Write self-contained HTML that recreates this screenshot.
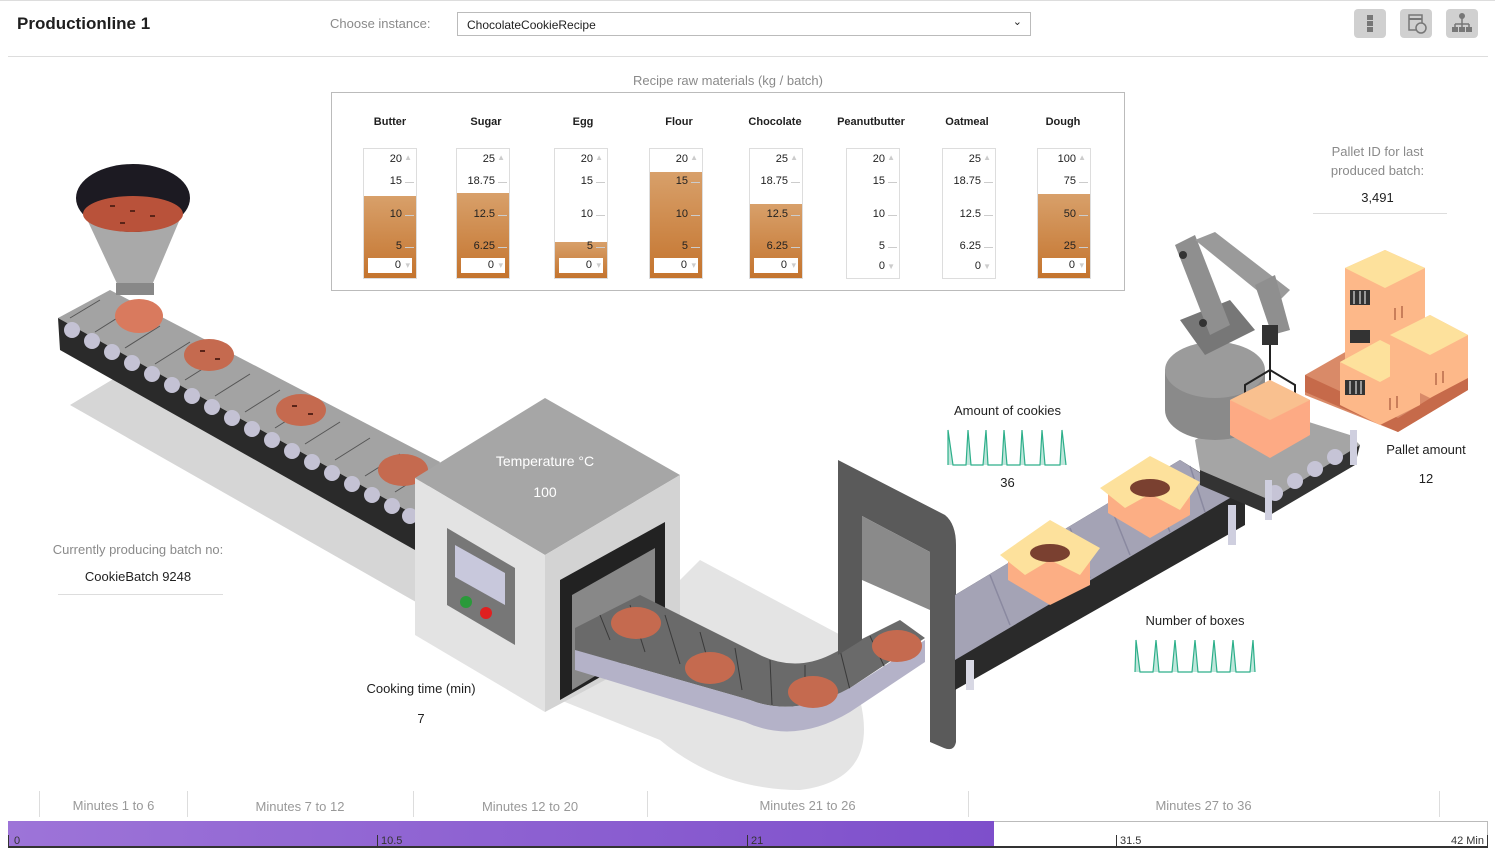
<!DOCTYPE html>
<html><head><meta charset="utf-8"><style>
*{margin:0;padding:0;box-sizing:border-box}
body{width:1495px;height:857px;background:#fff;font-family:"Liberation Sans",sans-serif;position:relative;overflow:hidden;color:#1f1f1f}
.a{position:absolute}
.g{position:absolute;top:148px;width:54px;height:131px;border:1px solid #ddd;background:#fff}
.g .f{position:absolute;left:0;right:0;bottom:0;background:linear-gradient(#d8a06a,#c4742e)}
.g .l{position:absolute;right:14px;font-size:11px;color:#222;text-align:right}
.g .t{position:absolute;right:2px;width:9px;height:1px;background:#ccc}
.g .b{position:absolute;left:4px;right:4px;top:109px;height:15px;background:#fff;font-size:11px;text-align:right;padding-right:11px;line-height:15px}
.g .b:after{content:"▾";position:absolute;right:2px;color:#ccc;font-size:9px}
.g .u{position:absolute;right:4px;top:4px;color:#ccc;font-size:8px}
.h{position:absolute;top:116px;width:90px;text-align:center;font-size:11px;font-weight:bold}
.c{text-align:center;font-size:13px}
.gray{color:#8a8a8a}
.ic{position:absolute;top:9px;width:32px;height:29px;background:#d0d0d0;border-radius:4px}
</style></head><body>
<div class="a" style="left:0;top:0;width:1495px;height:1px;background:#ddd"></div>
<div class="a" style="left:17px;top:14px;font-size:17px;font-weight:bold">Productionline 1</div>
<div class="a gray" style="left:330px;top:16px;font-size:13px">Choose instance:</div>
<div class="a" style="left:457px;top:12px;width:574px;height:24px;border:1px solid #bbb;font-size:12px;padding:5px 9px">ChocolateCookieRecipe<span style="position:absolute;right:8px;top:2px;font-size:11px">⌄</span></div>
<div class="ic" style="left:1354px"><div class="a" style="left:13px;top:6px;width:6px;height:5px;background:#777"></div><div class="a" style="left:13px;top:12px;width:6px;height:5px;background:#777"></div><div class="a" style="left:13px;top:18px;width:6px;height:5px;background:#777"></div></div>
<div class="ic" style="left:1400px"><svg width="32" height="29"><rect x="9" y="6" width="13" height="15" fill="none" stroke="#777" stroke-width="1.5"/><line x1="9" y1="10" x2="22" y2="10" stroke="#777" stroke-width="2"/><circle cx="21" cy="19" r="5" fill="#d0d0d0" stroke="#777" stroke-width="1.5"/></svg></div>
<div class="ic" style="left:1446px"><svg width="32" height="29"><circle cx="16" cy="7" r="3" fill="#777"/><path d="M16 9v6M9 15h14M9 15v4M16 15v4M23 15v4" stroke="#777" stroke-width="1.5" fill="none"/><rect x="6" y="18" width="6" height="5" fill="#777"/><rect x="13" y="18" width="6" height="5" fill="#777"/><rect x="20" y="18" width="6" height="5" fill="#777"/></svg></div>
<div class="a" style="left:8px;top:56px;width:1480px;height:1px;background:#ddd"></div>

<svg class="a" style="left:0;top:0" width="1495" height="857">
<polygon points="70,405 120,375 430,545 430,610" fill="#d6d6d6"/>
<path d="M560,700 L700,560 L850,640 L860,700 Q880,780 800,790 Q720,790 660,740 Z" fill="#e4e4e4"/>
<polygon points="58,318 110,290 440,462 415,515 " fill="#a3a3a3"/>
<polygon points="58,318 415,515 415,550 60,350" fill="#2a2a2a"/>
<g fill="#c4c2d4"><circle cx="72" cy="330" r="8"/><circle cx="92" cy="341" r="8"/><circle cx="112" cy="352" r="8"/><circle cx="132" cy="363" r="8"/><circle cx="152" cy="374" r="8"/><circle cx="172" cy="385" r="8"/><circle cx="192" cy="396" r="8"/><circle cx="212" cy="407" r="8"/><circle cx="232" cy="418" r="8"/><circle cx="252" cy="429" r="8"/><circle cx="272" cy="440" r="8"/><circle cx="292" cy="451" r="8"/><circle cx="312" cy="462" r="8"/><circle cx="332" cy="473" r="8"/><circle cx="352" cy="484" r="8"/><circle cx="372" cy="495" r="8"/><circle cx="392" cy="506" r="8"/><circle cx="410" cy="516" r="8"/></g>
<g stroke="#555" stroke-width="1"><line x1="100" y1="300" x2="70" y2="318"/><line x1="130" y1="310" x2="95" y2="332"/><line x1="160" y1="326" x2="125" y2="348"/><line x1="190" y1="342" x2="155" y2="364"/><line x1="220" y1="358" x2="185" y2="380"/><line x1="250" y1="374" x2="215" y2="396"/><line x1="280" y1="390" x2="245" y2="412"/><line x1="310" y1="406" x2="275" y2="428"/><line x1="340" y1="422" x2="305" y2="444"/><line x1="370" y1="438" x2="335" y2="460"/><line x1="400" y1="454" x2="365" y2="476"/><line x1="430" y1="470" x2="395" y2="492"/></g>
<polygon points="78,200 188,200 150,290 120,290" fill="#a9a9a9"/>
<rect x="116" y="283" width="38" height="12" fill="#888"/>
<ellipse cx="133" cy="198" rx="57" ry="34" fill="#1c1a22"/>
<ellipse cx="133" cy="214" rx="50" ry="18" fill="#b9523a"/>
<ellipse cx="139" cy="316" rx="24" ry="17" fill="#d97a5e"/>
<g fill="#c56a4f"><ellipse cx="209" cy="355" rx="25" ry="16"/><ellipse cx="301" cy="410" rx="25" ry="16"/><ellipse cx="403" cy="470" rx="25" ry="16"/></g>
<g fill="#5a2418"><rect x="110" y="205" width="5" height="2"/><rect x="130" y="210" width="5" height="2"/><rect x="150" y="215" width="5" height="2"/><rect x="120" y="222" width="5" height="2"/><rect x="200" y="350" width="5" height="2"/><rect x="215" y="358" width="5" height="2"/><rect x="292" y="405" width="5" height="2"/><rect x="308" y="413" width="5" height="2"/></g>
<!-- oven -->
<polygon points="415,478 545,398 680,475 545,555" fill="#a6a6a6"/>
<polygon points="415,478 545,555 545,712 415,635" fill="#e3e3e3"/>
<polygon points="545,555 680,475 680,640 545,712" fill="#d3d3d3"/>
<polygon points="447,528 515,568 515,645 447,605" fill="#777"/>
<polygon points="455,545 505,573 505,605 455,577" fill="#c8c8dc"/>
<circle cx="466" cy="602" r="6" fill="#2a9a3a"/><circle cx="486" cy="613" r="6" fill="#e02020"/>
<polygon points="560,580 665,522 665,640 560,700" fill="#222"/>
<polygon points="572,595 655,548 655,640 572,690" fill="#888"/>
<!-- U belt -->
<path d="M575,628 L640,595 L760,655 Q795,672 830,655 L900,620 L925,638 L850,688 Q795,718 750,700 L575,650 Z" fill="#6a6a6a"/>
<g stroke="#3a3a3a" stroke-width="1"><line x1="600" y1="615" x2="610" y2="640"/><line x1="630" y1="605" x2="645" y2="652"/><line x1="665" y1="615" x2="680" y2="664"/><line x1="700" y1="632" x2="712" y2="676"/><line x1="735" y1="648" x2="742" y2="690"/><line x1="770" y1="660" x2="772" y2="705"/><line x1="805" y1="665" x2="805" y2="708"/><line x1="840" y1="650" x2="850" y2="690"/><line x1="870" y1="636" x2="885" y2="668"/></g>
<path d="M575,650 L750,700 Q795,718 850,688 L925,640 L925,662 L850,712 Q795,745 745,722 L575,670 Z" fill="#b4b2c8"/>
<g fill="#c56a4f"><ellipse cx="636" cy="623" rx="25" ry="16"/><ellipse cx="710" cy="668" rx="25" ry="16"/><ellipse cx="813" cy="692" rx="25" ry="16"/><ellipse cx="897" cy="646" rx="25" ry="16"/></g>
<!-- door frame -->
<path d="M838,460 L945,515 Q956,524 956,545 L956,742 Q954,752 944,748 L930,742 L930,552 L862,516 L862,640 L838,655 Z" fill="#5a5a5a"/>
<path d="M862,516 L930,552 L930,610 L862,580 Z" fill="#8a8a8a"/>
<!-- right conveyor -->
<polygon points="955,595 1180,460 1245,500 1245,525 955,690" fill="#2a2a2a"/>
<polygon points="955,595 1180,460 1235,495 955,660" fill="#a4a3b5"/>
<g stroke="#8a89a0" stroke-width="1.5"><line x1="990" y1="575" x2="1010" y2="625"/><line x1="1030" y1="552" x2="1050" y2="602"/><line x1="1070" y1="528" x2="1090" y2="578"/><line x1="1110" y1="505" x2="1130" y2="555"/><line x1="1150" y1="482" x2="1170" y2="532"/><line x1="1190" y1="466" x2="1205" y2="512"/></g>
<rect x="966" y="660" width="8" height="30" fill="#d8d8e4"/>
<polygon points="1008,555 1050,530 1090,555 1090,585 1050,605 1008,580" fill="#fcae84"/>
<polygon points="1000,555 1050,520 1100,548 1080,575 1050,560 1025,575" fill="#fde19c"/>
<ellipse cx="1050" cy="553" rx="20" ry="9" fill="#7a4030"/>
<polygon points="1108,488 1150,462 1190,488 1190,515 1150,538 1108,513" fill="#fcae84"/>
<polygon points="1100,488 1150,456 1200,482 1180,510 1150,494 1125,508" fill="#fde19c"/>
<ellipse cx="1150" cy="488" rx="20" ry="9" fill="#7a4030"/>
<!-- robot conveyor -->
<polygon points="1195,440 1255,405 1350,435 1360,445 1270,500 1200,470" fill="#a5a5a5"/>
<polygon points="1200,470 1270,500 1360,445 1355,465 1270,515 1200,485" fill="#333"/>
<g fill="#c6c4d6"><circle cx="1275" cy="493" r="8"/><circle cx="1295" cy="481" r="8"/><circle cx="1315" cy="469" r="8"/><circle cx="1335" cy="457" r="8"/></g>
<rect x="1265" y="480" width="7" height="40" fill="#cfcfdf"/><rect x="1350" y="430" width="7" height="35" fill="#cfcfdf"/>
<rect x="1228" y="505" width="8" height="40" fill="#cfcfdf"/>
<ellipse cx="1215" cy="410" rx="50" ry="30" fill="#8a8a8a"/>
<rect x="1165" y="370" width="100" height="40" fill="#8a8a8a"/>
<ellipse cx="1215" cy="370" rx="50" ry="28" fill="#9b9b9b"/>
<polygon points="1180,320 1230,300 1255,330 1205,355" fill="#777"/>
<polygon points="1175,245 1195,235 1230,325 1210,335" fill="#8f8f8f"/>
<polygon points="1195,240 1215,232 1290,290 1275,305" fill="#9a9a9a"/>
<polygon points="1255,285 1275,275 1290,330 1272,335" fill="#8f8f8f"/>
<circle cx="1183" cy="255" r="4" fill="#333"/><circle cx="1203" cy="323" r="4" fill="#333"/>
<rect x="1262" y="325" width="16" height="20" fill="#333"/>
<path d="M1270,345 V370 M1270,370 L1245,385 V400 M1270,370 L1295,385 V400 M1270,370 V390" stroke="#222" stroke-width="2" fill="none"/>
<polygon points="1230,400 1270,380 1310,400 1310,435 1270,458 1230,435" fill="#fdaa84"/>
<polygon points="1230,400 1270,380 1310,400 1270,420" fill="#f9c08f"/>
<!-- pallet -->
<polygon points="1305,375 1375,335 1468,370 1468,390 1398,432 1305,395" fill="#d98a68"/>
<polygon points="1305,375 1398,418 1468,375 1468,390 1398,432 1305,392" fill="#c66a4a"/>
<polygon points="1345,268 1385,250 1425,268 1425,315 1385,335 1345,315" fill="#fdb889"/>
<polygon points="1345,268 1385,250 1425,268 1385,288" fill="#fde19c"/>
<polygon points="1345,315 1385,300 1425,315 1425,370 1385,390 1345,370" fill="#fdb889"/>
<polygon points="1340,362 1380,340 1420,360 1420,405 1380,425 1340,405" fill="#fdb889"/>
<polygon points="1340,362 1380,340 1420,360 1380,382" fill="#fde19c"/>
<polygon points="1390,335 1430,315 1468,335 1468,378 1430,398 1390,378" fill="#fdb889"/>
<polygon points="1390,335 1430,315 1468,335 1430,355" fill="#fde19c"/>
<g fill="#333"><rect x="1350" y="290" width="20" height="15"/><rect x="1345" y="380" width="20" height="15"/><rect x="1350" y="330" width="20" height="13"/></g>
<g stroke="#fff" stroke-width="1"><line x1="1354" y1="291" x2="1354" y2="304"/><line x1="1360" y1="291" x2="1360" y2="304"/><line x1="1365" y1="291" x2="1365" y2="304"/><line x1="1350" y1="381" x2="1350" y2="394"/><line x1="1356" y1="381" x2="1356" y2="394"/><line x1="1361" y1="381" x2="1361" y2="394"/></g>
<g stroke="#b86a4a" stroke-width="1.5"><path d="M1395,320 v-12 M1402,318 v-12 M1390,410 v-12 M1397,408 v-12 M1436,385 v-12 M1443,383 v-12"/></g>
<g fill="#bfe6db" stroke="#2daf8a" stroke-width="1.2">
<path d="M948,465 L948,430 L953,465 L966,465 L968,430 L971,465 L983,465 L986,430 L988,465 L1002,465 L1004,430 L1007,465 L1020,465 L1022,430 L1025,465 L1040,465 L1042,430 L1045,465 L1060,465 L1062,430 L1066,465"/>
<path d="M1135,672 L1136,640 L1140,672 L1153,672 L1156,640 L1159,672 L1172,672 L1175,640 L1178,672 L1192,672 L1195,640 L1198,672 L1211,672 L1214,640 L1217,672 L1230,672 L1233,640 L1236,672 L1250,672 L1253,640 L1255,672"/>
</g>
</svg>

<div class="a gray c" style="left:331px;top:73px;width:794px">Recipe raw materials (kg / batch)</div>
<div class="a" style="left:331px;top:92px;width:794px;height:199px;border:1px solid #bbb;background:#fff"></div>
<div class="h" style="left:345px">Butter</div><div class="h" style="left:441px">Sugar</div><div class="h" style="left:538px">Egg</div><div class="h" style="left:634px">Flour</div><div class="h" style="left:730px">Chocolate</div><div class="h" style="left:826px">Peanutbutter</div><div class="h" style="left:922px">Oatmeal</div><div class="h" style="left:1018px">Dough</div>

<div class="g" style="left:363px"><div class="f" style="height:82px"></div><span class="l" style="top:4px">20</span><span class="u">▲</span><span class="l" style="top:26px">15</span><span class="t" style="top:33px"></span><span class="l" style="top:59px">10</span><span class="t" style="top:66px"></span><span class="l" style="top:91px">5</span><span class="t" style="top:98px"></span><div class="b">0</div></div>
<div class="g" style="left:456px"><div class="f" style="height:85px"></div><span class="l" style="top:4px">25</span><span class="u">▲</span><span class="l" style="top:26px">18.75</span><span class="t" style="top:33px"></span><span class="l" style="top:59px">12.5</span><span class="t" style="top:66px"></span><span class="l" style="top:91px">6.25</span><span class="t" style="top:98px"></span><div class="b">0</div></div>
<div class="g" style="left:554px"><div class="f" style="height:36px"></div><span class="l" style="top:4px">20</span><span class="u">▲</span><span class="l" style="top:26px">15</span><span class="t" style="top:33px"></span><span class="l" style="top:59px">10</span><span class="t" style="top:66px"></span><span class="l" style="top:91px">5</span><span class="t" style="top:98px"></span><div class="b">0</div></div>
<div class="g" style="left:649px"><div class="f" style="height:106px"></div><span class="l" style="top:4px">20</span><span class="u">▲</span><span class="l" style="top:26px">15</span><span class="t" style="top:33px"></span><span class="l" style="top:59px">10</span><span class="t" style="top:66px"></span><span class="l" style="top:91px">5</span><span class="t" style="top:98px"></span><div class="b">0</div></div>
<div class="g" style="left:749px"><div class="f" style="height:74px"></div><span class="l" style="top:4px">25</span><span class="u">▲</span><span class="l" style="top:26px">18.75</span><span class="t" style="top:33px"></span><span class="l" style="top:59px">12.5</span><span class="t" style="top:66px"></span><span class="l" style="top:91px">6.25</span><span class="t" style="top:98px"></span><div class="b">0</div></div>
<div class="g" style="left:846px"><span class="l" style="top:4px">20</span><span class="u">▲</span><span class="l" style="top:26px">15</span><span class="t" style="top:33px"></span><span class="l" style="top:59px">10</span><span class="t" style="top:66px"></span><span class="l" style="top:91px">5</span><span class="t" style="top:98px"></span><span class="l" style="top:111px">0</span><span class="u" style="top:113px">▼</span></div>
<div class="g" style="left:942px"><span class="l" style="top:4px">25</span><span class="u">▲</span><span class="l" style="top:26px">18.75</span><span class="t" style="top:33px"></span><span class="l" style="top:59px">12.5</span><span class="t" style="top:66px"></span><span class="l" style="top:91px">6.25</span><span class="t" style="top:98px"></span><span class="l" style="top:111px">0</span><span class="u" style="top:113px">▼</span></div>
<div class="g" style="left:1037px"><div class="f" style="height:84px"></div><span class="l" style="top:4px">100</span><span class="u">▲</span><span class="l" style="top:26px">75</span><span class="t" style="top:33px"></span><span class="l" style="top:59px">50</span><span class="t" style="top:66px"></span><span class="l" style="top:91px">25</span><span class="t" style="top:98px"></span><div class="b">0</div></div>

<div class="a gray c" style="left:1310px;top:142px;width:135px;line-height:19px">Pallet ID for last<br>produced batch:</div>
<div class="a c" style="left:1310px;top:190px;width:135px">3,491</div>
<div class="a" style="left:1313px;top:213px;width:134px;height:1px;background:#ddd"></div>
<div class="a gray c" style="left:38px;top:542px;width:200px">Currently producing batch no:</div>
<div class="a c" style="left:38px;top:569px;width:200px">CookieBatch 9248</div>
<div class="a" style="left:58px;top:594px;width:165px;height:1px;background:#ddd"></div>
<div class="a c" style="left:480px;top:453px;width:130px;color:#fff;font-size:14px">Temperature °C</div>
<div class="a c" style="left:480px;top:484px;width:130px;color:#fff;font-size:14px">100</div>
<div class="a c" style="left:940px;top:403px;width:135px">Amount of cookies</div>
<div class="a c" style="left:940px;top:475px;width:135px">36</div>
<div class="a c" style="left:1126px;top:613px;width:138px">Number of boxes</div>
<div class="a c" style="left:1370px;top:442px;width:112px">Pallet amount</div>
<div class="a c" style="left:1370px;top:471px;width:112px">12</div>
<div class="a c" style="left:350px;top:681px;width:142px">Cooking time (min)</div>
<div class="a c" style="left:350px;top:711px;width:142px">7</div>

<div class="a" style="left:8px;top:791px;width:1480px;height:30px;font-size:13px;color:#999">
<div class="a" style="left:31px;top:0;width:1px;height:26px;background:#ddd"></div>
<div class="a c" style="left:32px;top:7px;width:147px">Minutes 1 to 6</div>
<div class="a" style="left:179px;top:0;width:1px;height:26px;background:#ddd"></div>
<div class="a c" style="left:179px;top:8px;width:226px">Minutes 7 to 12</div>
<div class="a" style="left:405px;top:0;width:1px;height:26px;background:#ddd"></div>
<div class="a c" style="left:405px;top:8px;width:234px">Minutes 12 to 20</div>
<div class="a" style="left:639px;top:0;width:1px;height:26px;background:#ddd"></div>
<div class="a c" style="left:639px;top:7px;width:321px">Minutes 21 to 26</div>
<div class="a" style="left:960px;top:0;width:1px;height:26px;background:#ddd"></div>
<div class="a c" style="left:960px;top:7px;width:471px">Minutes 27 to 36</div>
<div class="a" style="left:1431px;top:0;width:1px;height:26px;background:#ddd"></div>
</div>
<div class="a" style="left:8px;top:821px;width:1480px;height:27px;border:1px solid #bbb;background:#fff"></div>
<div class="a" style="left:8px;top:821px;width:986px;height:27px;background:linear-gradient(90deg,#9d74d8,#7e4fcb)"></div>
<div class="a" style="left:8px;top:846px;width:1480px;height:2px;background:#333"></div>
<div class="a" style="left:8px;top:835px;font-size:11px;color:#333;width:1480px;height:12px">
<span class="a" style="left:0;border-left:1px solid #333;padding-left:5px;height:12px;line-height:12px">0</span>
<span class="a" style="left:369px;border-left:1px solid #333;padding-left:3px;height:12px;line-height:12px">10.5</span>
<span class="a" style="left:739px;border-left:1px solid #333;padding-left:3px;height:12px;line-height:12px">21</span>
<span class="a" style="left:1108px;border-left:1px solid #333;padding-left:3px;height:12px;line-height:12px">31.5</span>
<span class="a" style="right:0;border-right:1px solid #333;padding-right:3px;height:12px;line-height:12px">42 Min</span>
</div>
</body></html>
